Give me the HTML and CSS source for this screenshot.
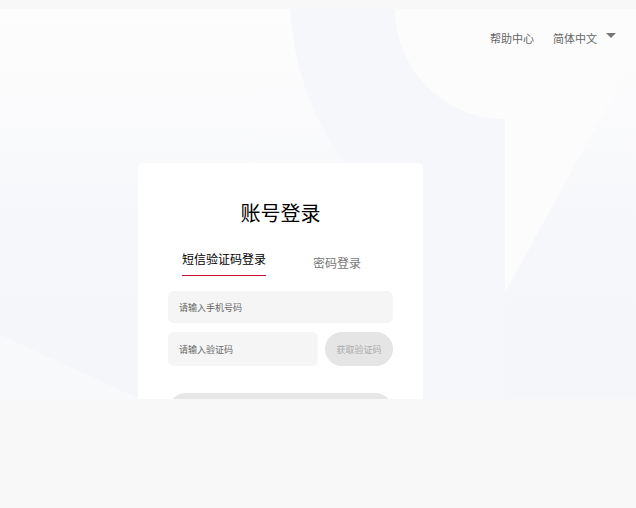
FILE: index.html
```html
<!DOCTYPE html>
<html lang="zh-CN">
<head>
<meta charset="utf-8">
<title>账号登录</title>
<link rel="stylesheet" href="styles.css">
</head>
<body>
<div class="page">
  <div class="hero">
    <svg class="bg" width="636" height="390" viewBox="0 0 636 390" aria-hidden="true">
      <path d="M290,0 C295,60 310,115 360,170 L360,390 L505,390 L505,110 A110,110 0 0 1 395,0 Z" fill="#f6f7fa"/>
      <path d="M395,0 A110,110 0 0 0 505,110 L505,284 L636,44 L636,0 Z" fill="#fcfcfd"/>
      <path d="M0,326 L140,390 L0,390 Z" fill="#f8f9fb"/>
    </svg>
    <header class="topbar">
      <a class="topbar-link">帮助中心</a>
      <a class="topbar-link lang">简体中文<span class="caret"></span></a>
    </header>
    <section class="card">
      <h1 class="card-title">账号登录</h1>
      <div class="tabs">
        <div class="tab active">短信验证码登录</div>
        <div class="tab">密码登录</div>
      </div>
      <div class="field">
        <input class="input" type="text" placeholder="请输入手机号码">
      </div>
      <div class="field row">
        <input class="input code" type="text" placeholder="请输入验证码">
        <button class="code-btn" type="button">获取验证码</button>
      </div>
      <button class="submit" type="button" aria-label="登录"></button>
    </section>
  </div>
</div>
</body>
</html>
```

FILE: styles.css
```css
html, body {
  margin: 0;
  padding: 0;
}
body {
  background: #f8f8f8;
  font-family: "Noto Sans CJK SC", "Noto Sans", sans-serif;
  width: 636px;
  height: 508px;
  overflow: hidden;
}
.page {
  padding-top: 9px;
}
.hero {
  position: relative;
  height: 390px;
  overflow: hidden;
  background: linear-gradient(180deg, #fdfdfd 0%, #fcfcfd 15%, #f6f7fa 55%, #f5f6fa 100%);
}
.bg {
  position: absolute;
  left: 0;
  top: 0;
  z-index: 0;
}
.topbar {
  position: relative;
  z-index: 1;
  display: flex;
  justify-content: flex-end;
  align-items: center;
  padding: 20px 20px 0 0;
  height: 18px;
}
.topbar-link {
  font-size: 11px;
  line-height: 18px;
  color: #666;
  display: flex;
  align-items: center;
}
.topbar-link.lang {
  margin-left: 19px;
}
.caret {
  width: 0;
  height: 0;
  border-left: 5px solid transparent;
  border-right: 5px solid transparent;
  border-top: 5px solid #777;
  margin-left: 9px;
  margin-top: -5px;
}
.card {
  position: relative;
  z-index: 1;
  width: 285px;
  height: 320px;
  margin: 116px 0 0 138px;
  background: #fff;
  border-radius: 5px;
  padding: 36px 30px 0;
  box-sizing: border-box;
}
.card-title {
  margin: 0;
  font-size: 20px;
  line-height: 28px;
  font-weight: 400;
  color: #000;
  text-align: center;
}
.tabs {
  display: flex;
  align-items: flex-start;
  margin-top: 23px;
  padding-left: 14px;
  height: 26px;
}
.tab {
  font-size: 12px;
  line-height: 17px;
  color: #777;
}
.tab.active {
  color: #000;
  padding-bottom: 8px;
  border-bottom: 1px solid #c8102e;
}
.tab + .tab {
  margin-left: 47px;
  margin-top: 4px;
}
.field {
  margin-top: 15px;
}
.field.row {
  display: flex;
  gap: 7px;
  margin-top: 9px;
}
.input {
  display: block;
  width: 100%;
  height: 32px;
  box-sizing: border-box;
  border: none;
  outline: none;
  border-radius: 6px;
  background: #f5f5f5;
  padding: 0 11px;
  font-family: inherit;
  font-size: 9px;
  color: #333;
}
.input::placeholder {
  color: #666;
}
.input.code {
  width: 150px;
  height: 34px;
}
.code-btn {
  width: 68px;
  height: 34px;
  border: none;
  border-radius: 17px;
  background: #e5e5e5;
  color: #aaa;
  font-family: inherit;
  font-size: 9px;
  padding: 0;
}
.submit {
  display: block;
  width: 100%;
  height: 36px;
  margin-top: 27px;
  border: none;
  border-radius: 18px;
  background: #e6e6e6;
}
```
